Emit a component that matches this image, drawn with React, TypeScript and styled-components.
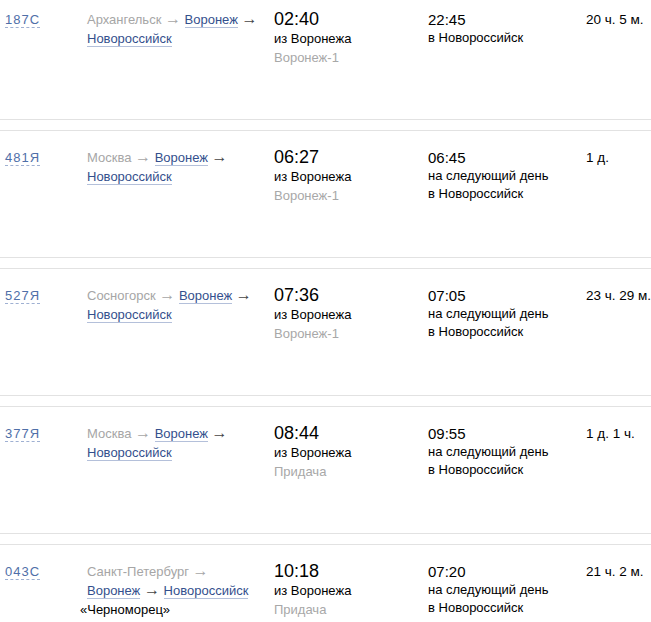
import React from 'react';
import styled, { createGlobalStyle } from 'styled-components';

const GlobalStyle = createGlobalStyle`
  html, body {
    margin: 0;
    padding: 0;
    background: #fff;
  }
  body {
    font-family: "Liberation Sans", Arial, sans-serif;
    font-size: 13px;
    color: #000;
  }
`;

const List = styled.div`
  margin-top: -8px;
  display: flex;
  flex-direction: column;
  gap: 10px;
`;

const Trip = styled.div`
  display: grid;
  grid-template-columns: 82px 187px 154px 158px 1fr;
  align-items: start;
  box-sizing: border-box;
  height: 128px;
  padding-left: 5px;
  padding-top: 17px;
  border-top: 1px solid #e2e2e2;
  border-bottom: 1px solid #e2e2e2;
`;

const Number = styled.div`
  line-height: 19px;
  span {
    color: #4f6fa8;
    letter-spacing: 1px;
    border-bottom: 1px dashed #9fb0d2;
  }
`;

const Route = styled.div`
  line-height: 19px;
  color: #a6a6a6;
`;

const Arrow = styled.span<{ $passed?: boolean }>`
  font-size: 16px;
  line-height: 13px;
  color: ${(p) => (p.$passed ? '#444' : '#a6a6a6')};
`;

const Station = styled.span`
  color: #34508d;
  border-bottom: 1px solid #b4c0da;
`;

const TrainName = styled.div`
  color: #000;
  margin-left: -7px;
`;

const Departure = styled.div`
  line-height: 19px;
`;

const BigTime = styled.div`
  font-size: 18px;
  line-height: 19px;
`;

const Place = styled.div<{ $muted?: boolean }>`
  color: ${(p) => (p.$muted ? '#a8a8a8' : '#000')};
`;

const Arrival = styled.div`
  line-height: 18px;
`;

const SmallTime = styled.div`
  font-size: 15px;
  line-height: 19px;
`;

const Duration = styled.div`
  font-size: 13.5px;
  line-height: 19px;
  white-space: nowrap;
`;

type Item = {
  num: string;
  from: string;
  fromBreak?: boolean;
  name?: string;
  dep: string;
  station: string;
  arr: string;
  nextDay: boolean;
  dur: string;
};

const items: Item[] = [
  { num: '187С', from: 'Архангельск', dep: '02:40', station: 'Воронеж-1', arr: '22:45', nextDay: false, dur: '20 ч. 5 м.' },
  { num: '481Я', from: 'Москва', dep: '06:27', station: 'Воронеж-1', arr: '06:45', nextDay: true, dur: '1 д.' },
  { num: '527Я', from: 'Сосногорск', dep: '07:36', station: 'Воронеж-1', arr: '07:05', nextDay: true, dur: '23 ч. 29 м.' },
  { num: '377Я', from: 'Москва', dep: '08:44', station: 'Придача', arr: '09:55', nextDay: true, dur: '1 д. 1 ч.' },
  { num: '043С', from: 'Санкт-Петербург', fromBreak: true, name: '«Черноморец»', dep: '10:18', station: 'Придача', arr: '07:20', nextDay: true, dur: '21 ч. 2 м.' },
];

export default function App() {
  return (
    <>
      <GlobalStyle />
      <List>
        {items.map((t) => (
          <Trip key={t.num}>
            <Number>
              <span>{t.num}</span>
            </Number>
            <Route>
              {t.from} <Arrow>→</Arrow>
              {t.fromBreak ? <br /> : ' '}
              <Station>Воронеж</Station> <Arrow $passed>→</Arrow>
              {t.fromBreak ? ' ' : <br />}
              <Station>Новороссийск</Station>
              {t.name && <TrainName>{t.name}</TrainName>}
            </Route>
            <Departure>
              <BigTime>{t.dep}</BigTime>
              <Place>из Воронежа</Place>
              <Place $muted>{t.station}</Place>
            </Departure>
            <Arrival>
              <SmallTime>{t.arr}</SmallTime>
              {t.nextDay && <div>на следующий день</div>}
              <div>в Новороссийск</div>
            </Arrival>
            <Duration>{t.dur}</Duration>
          </Trip>
        ))}
      </List>
    </>
  );
}
